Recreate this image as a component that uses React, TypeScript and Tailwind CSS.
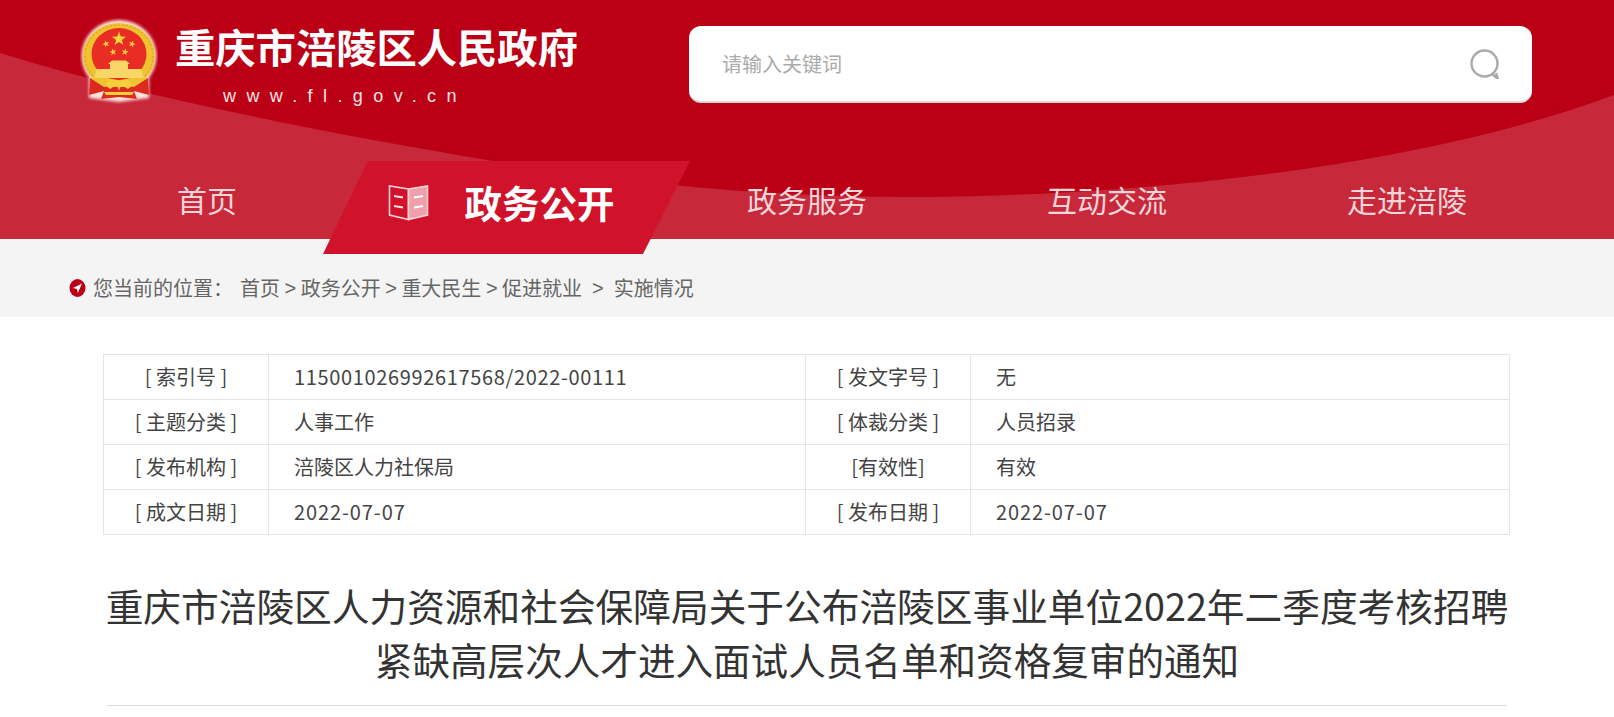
const font = "font-['Noto_Sans_CJK_SC','Liberation_Sans',sans-serif]";

function star(cx: number, cy: number, r: number, rot = 0) {
  const pts: string[] = [];
  for (let i = 0; i < 10; i++) {
    const rad = i % 2 === 0 ? r : r * 0.4;
    const a = ((-90 + rot + i * 36) * Math.PI) / 180;
    pts.push(`${(cx + rad * Math.cos(a)).toFixed(2)},${(cy + rad * Math.sin(a)).toFixed(2)}`);
  }
  return pts.join(" ");
}

function Emblem() {
  return (
    <svg width="78" height="86" viewBox="0 0 78 86" className="shrink-0">
      <defs>
        <filter id="glow" x="-20%" y="-20%" width="140%" height="140%">
          <feGaussianBlur stdDeviation="1.5" />
        </filter>
      </defs>
      <g filter="url(#glow)" fill="#fbe4dd">
        <ellipse cx="39" cy="38" rx="37.5" ry="36" />
        <path d="M9 58 L69 58 L69 80 L39 84 L9 80 Z" />
      </g>
      <ellipse cx="39" cy="38" rx="36" ry="33" fill="#efc230" />
      <ellipse cx="39" cy="38" rx="34" ry="31" fill="none" stroke="#dfa22a" strokeWidth="1.2" strokeDasharray="2 2" />
      <ellipse cx="39" cy="36" rx="27.5" ry="26" fill="#ea2d24" />
      <polygon points={star(39, 21, 7.5)} fill="#f9d33b" />
      <polygon points={star(26, 26, 3.6, -20)} fill="#f9d33b" />
      <polygon points={star(52, 26, 3.6, 20)} fill="#f9d33b" />
      <polygon points={star(33, 34, 3.6, -10)} fill="#f9d33b" />
      <polygon points={star(45, 34, 3.6, 10)} fill="#f9d33b" />
      <path d="M28 46 L32 42.5 H46 L50 46 H48 V51 H61 L64 60 H14 L17 51 H30 V46 Z" fill="#f8d668" />
      <path d="M12 58 Q39 78 66 58 L68 64 Q39 84 10 64 Z" fill="#efc230" />
      <path d="M10 60 L24 69 L37 67 L39 73 L41 67 L54 69 L68 60 L69 77 L54 73 L57 81 L39 79 L21 81 L24 73 L9 77 Z" fill="#dc2a20" />
      <path d="M25 67 Q32 58 39 64 Q46 58 53 67 L48 71 Q43 67 39 70 Q35 67 30 71 Z" fill="#f6cf3c" />
      <path d="M24 74 H54 L52 77 H26 Z" fill="#f6cf3c" />
    </svg>
  );
}

function BookIcon() {
  return (
    <svg width="41" height="37" viewBox="0 0 41 37" fill="none" stroke="#f7d3d8" strokeWidth="1.6">
      <path d="M20.5 5 L1.5 2 V31 L20.5 35.5 Z" />
      <path d="M20.5 5 L39.5 2 V31 L20.5 35.5 Z" fill="#f0a0ab" />
      <path d="M6 12 L15 13.5 M6 22 L15 23.5" stroke="#fbe6e9" strokeWidth="1.8" />
      <path d="M26 13.5 L35 12 M26 23.5 L35 22" stroke="#fff" strokeWidth="1.8" />
    </svg>
  );
}

function Locator() {
  return (
    <svg width="17" height="18" viewBox="0 0 17 18" className="shrink-0">
      <ellipse cx="8.5" cy="9" rx="8" ry="9" fill="#bb0016" />
      <path d="M13 4.5 L4 9 L8 10 L8.8 14 Z" fill="#fff" />
    </svg>
  );
}

const nav = ["首页", "政务公开", "政务服务", "互动交流", "走进涪陵"];

const rows = [
  ["[ 索引号 ]", "115001026992617568/2022-00111", "[ 发文字号 ]", "无"],
  ["[ 主题分类 ]", "人事工作", "[ 体裁分类 ]", "人员招录"],
  ["[ 发布机构 ]", "涪陵区人力社保局", "[有效性]", "有效"],
  ["[ 成文日期 ]", "2022-07-07", "[ 发布日期 ]", "2022-07-07"],
];

const sep = "mx-[4.5px] font-['Liberation_Sans',sans-serif]";

function valueClass(v: string) {
  if (v.length > 20) return "tracking-[0.65px]";
  if (v.startsWith("2022")) return "tracking-[0.9px]";
  return "";
}

export default function App() {
  return (
    <div className={`${font} h-[717px] overflow-hidden bg-white`}>
      <header className="relative z-10 h-[239px] bg-[#c7283a]">
        <svg className="absolute inset-0" width="1614" height="239" viewBox="0 0 1614 239">
          <path d="M0 0H1614V95C1400 175 1100 197 903 197C760 197 620 182 487 160C340 135 150 100 0 53Z" fill="#bb0016" />
        </svg>
        <div className="relative mx-auto w-[1500px]">
          <div className="flex h-[161px] items-start">
            <div className="ml-[23px] mt-[18px]">
              <Emblem />
            </div>
            <div className="ml-[17px] mt-[21px] w-[420px]">
              <div className="whitespace-nowrap text-[40.3px] font-bold leading-[50px] text-white">重庆市涪陵区人民政府</div>
              <div className="ml-[48px] mt-[14px] font-['Liberation_Sans',sans-serif] text-[18px] leading-[22px] tracking-[10.4px] text-[#fbe4e6]">www.fl.gov.cn</div>
            </div>
            <div className="ml-[94px] mt-[26px] flex h-[77px] w-[843px] items-center rounded-[12px] border-b-2 border-[#d8d8d8] bg-white pl-[33px] pr-[32px]">
              <input
                placeholder="请输入关键词"
                className="min-w-0 flex-1 bg-transparent text-[20px] text-[#666] outline-none placeholder:text-[#aaa]"
              />
              <svg width="30" height="30" viewBox="0 0 30 30" fill="none" stroke="#aaa" strokeWidth="2.4">
                <circle cx="14.5" cy="14.5" r="13" />
                <path d="M22 25 L28 30 L26 24" />
              </svg>
            </div>
          </div>
          <nav className="grid grid-cols-[repeat(5,300px)]">
            {nav.map((n, i) =>
              i === 1 ? (
                <div key={n} className="relative flex h-[78px] items-center justify-center">
                  <div className="absolute left-[-34px] top-0 h-[93px] w-[367px] bg-[#d0122a] [clip-path:polygon(45px_0,100%_0,320px_100%,0_100%)]" />
                  <div className="relative mr-[12px] mt-[4px] flex items-center">
                    <span className="mr-[36px]"><BookIcon /></span>
                    <span className="text-[37.5px] font-bold leading-[50px] text-white">{n}</span>
                  </div>
                </div>
              ) : (
                <div key={n} className="flex h-[76px] items-center justify-center text-[30px] leading-[40px] text-[#f6d5d9]">
                  {n}
                </div>
              ),
            )}
          </nav>
        </div>
      </header>
      <div className="flex h-[78px] items-center bg-[#f4f4f4] pl-[69px] pt-[20px] text-[20px] text-[#666]">
        <Locator />
        <span className="ml-[7px]">您当前的位置：</span>
        <span className="ml-[7px]">首页</span>
        <span className={sep}>&gt;</span>
        <span>政务公开</span>
        <span className={sep}>&gt;</span>
        <span>重大民生</span>
        <span className={sep}>&gt;</span>
        <span>促进就业</span>
        <span className="mx-[10px] font-['Liberation_Sans',sans-serif]">&gt;</span>
        <span>实施情况</span>
      </div>
      <main className="pt-[37px]">
        <div className="ml-[103px] w-[1407px] border border-b-0 border-[#e5e5e5] text-[20px] text-[#444]">
          {rows.map((r) => (
            <div key={r[0]} className="grid h-[45px] grid-cols-[164px_537px_165px_1fr] items-stretch border-b border-[#e5e5e5]">
              <div className="flex items-center justify-center">{r[0]}</div>
              <div className={`flex items-center border-l border-[#e5e5e5] pl-[25px] ${valueClass(r[1])}`}>{r[1]}</div>
              <div className="flex items-center justify-center border-l border-[#e5e5e5]">{r[2]}</div>
              <div className={`flex items-center border-l border-[#e5e5e5] pl-[25px] ${valueClass(r[3])}`}>{r[3]}</div>
            </div>
          ))}
        </div>
        <div className="mx-[107px] mt-[43px] h-[128px] border-b border-[#ddd] text-center text-[37.7px] leading-[54px] text-[#333]">
          <div className="-mx-[10px] whitespace-nowrap">
            重庆市涪陵区人力资源和社会保障局关于公布涪陵区事业单位2022年二季度考核招聘
          </div>
          <div className="text-[37.6px]">紧缺高层次人才进入面试人员名单和资格复审的通知</div>
        </div>
      </main>
    </div>
  );
}
